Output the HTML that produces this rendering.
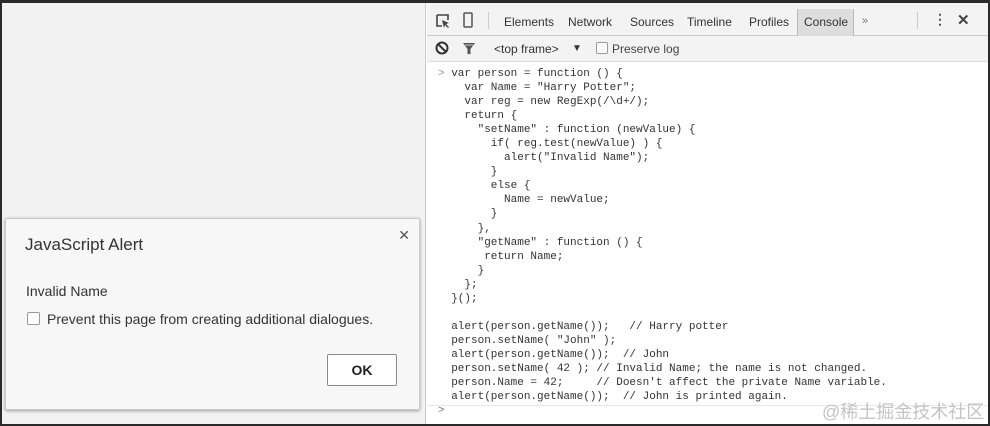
<!DOCTYPE html>
<html><head><meta charset="utf-8"><style>
*{margin:0;padding:0;box-sizing:border-box}
body{width:990px;height:426px;overflow:hidden;background:#fff;font-family:"Liberation Sans",sans-serif;position:relative}
.frame{position:absolute;left:0;top:0;width:990px;height:426px;border:2px solid #2a2a2a;border-top-width:3px}
.left{position:absolute;left:2px;top:3px;width:424px;height:421px;background:#f2f2f2;border-right:1px solid #ccc}
.dlg{position:absolute;left:5px;top:218px;width:415px;height:192px;background:#f7f7f7;border:1px solid #c8c8c8;box-shadow:0 1px 3px rgba(0,0,0,.35);border-radius:2px}
.dlg .t{position:absolute;left:19px;top:16px;font-size:17px;color:#333}
.dlg .x{position:absolute;right:9px;top:8px;font-size:14px;color:#555}
.dlg .m{position:absolute;left:20px;top:64px;font-size:14px;color:#333}
.dlg .cb{position:absolute;left:21px;top:93px;width:13px;height:13px;border:1px solid #999;background:#fff;border-radius:2px}
.dlg .c{position:absolute;left:41px;top:92px;font-size:14px;color:#333}
.dlg .ok{position:absolute;left:321px;top:135px;width:70px;height:32px;border:1px solid #8a8a8a;background:#fff;font-weight:bold;font-size:14px;text-align:center;line-height:30px;color:#222;border-radius:2px}
.tb1{position:absolute;left:427px;top:3px;width:561px;height:33px;background:#f3f3f3;border-bottom:1px solid #ccc;font-size:12px;color:#333}
.tb1 span{position:absolute;top:12px}
.tb2{position:absolute;left:427px;top:36px;width:561px;height:26px;background:#f3f3f3;border-bottom:1px solid #ddd;font-size:12px;color:#333}
.tb2 span{position:absolute;top:6px}
pre{position:absolute;left:438px;top:67px;font-family:"Liberation Mono",monospace;font-size:11px;line-height:14.05px;color:#333}
.sep{position:absolute;left:427px;top:405px;width:561px;height:1px;background:#e6e6e6}
.wm{position:absolute;left:822px;top:398px;white-space:nowrap;font-family:"Liberation Sans","Noto Sans CJK SC",sans-serif;font-size:18px;color:#c4c4c4}
</style></head><body>
<div class="left"></div>
<div class="dlg">
<div class="t">JavaScript Alert</div><div class="x">✕</div>
<div class="m">Invalid Name</div>
<div class="cb"></div><div class="c">Prevent this page from creating additional dialogues.</div>
<div class="ok">OK</div>
</div>
<div class="tb1">
<svg style="position:absolute;left:8px;top:10px" width="16" height="16" viewBox="0 0 16 16"><path d="M2 2h11v5M2 2v11h5" fill="none" stroke="#444" stroke-width="1.6"/><path d="M7 7l7 3-3 1 3 3-1 1-3-3-1 3z" fill="#444"/></svg>
<svg style="position:absolute;left:36px;top:9px" width="10" height="16" viewBox="0 0 10 16"><rect x="1" y="1" width="8" height="14" rx="1" fill="none" stroke="#555" stroke-width="1.5"/></svg>
<div style="position:absolute;left:61px;top:9px;width:1px;height:17px;background:#ccc"></div>
<span style="left:77px">Elements</span><span style="left:141px">Network</span><span style="left:203px">Sources</span><span style="left:260px">Timeline</span><span style="left:322px">Profiles</span>
<div style="position:absolute;left:370px;top:6px;width:57px;height:27px;background:#ddd;border-left:1px solid #bbb;border-right:1px solid #bbb"></div>
<span style="left:377px">Console</span><span style="left:435px;font-size:11px;color:#777">»</span>
<div style="position:absolute;left:490px;top:9px;width:1px;height:17px;background:#ccc"></div>
<span style="left:506px;top:8px;font-weight:bold;font-size:14px;color:#555">⋮</span>
<span style="left:530px;top:8px;font-size:15px;font-weight:bold;color:#444">✕</span>
</div>
<div class="tb2">
<svg style="position:absolute;left:8px;top:5px" width="14" height="14" viewBox="0 0 14 14"><circle cx="7" cy="7" r="5.5" fill="none" stroke="#333" stroke-width="2"/><path d="M3 3l8 8" stroke="#333" stroke-width="2"/></svg>
<svg style="position:absolute;left:35px;top:6px" width="14" height="13" viewBox="0 0 14 13"><path d="M1 1h12L8.5 7v5h-3V7z" fill="#555"/><path d="M3 3h8" stroke="#ccc"/></svg>
<span style="left:67px">&lt;top frame&gt;</span><span style="left:145px;font-size:10px;top:7px">▼</span>
<div style="position:absolute;left:169px;top:6px;width:12px;height:12px;border:1px solid #999;background:#fafafa;border-radius:2px"></div>
<span style="left:185px;color:#444">Preserve log</span>
</div>
<pre><span style="color:#999">&gt;</span> var person = function () {
    var Name = "Harry Potter";
    var reg = new RegExp(/\d+/);
    return {
      "setName" : function (newValue) {
        if( reg.test(newValue) ) {
          alert("Invalid Name");
        }
        else {
          Name = newValue;
        }
      },
      "getName" : function () {
       return Name;
      }
    };
  }();

  alert(person.getName());   // Harry potter
  person.setName( "John" );
  alert(person.getName());  // John
  person.setName( 42 ); // Invalid Name; the name is not changed.
  person.Name = 42;     // Doesn't affect the private Name variable.
  alert(person.getName());  // John is printed again.
<span style="color:#777">&gt;</span></pre>
<div class="sep"></div>
<div class="wm">@稀土掘金技术社区</div>
<div class="frame"></div>
</body></html>
